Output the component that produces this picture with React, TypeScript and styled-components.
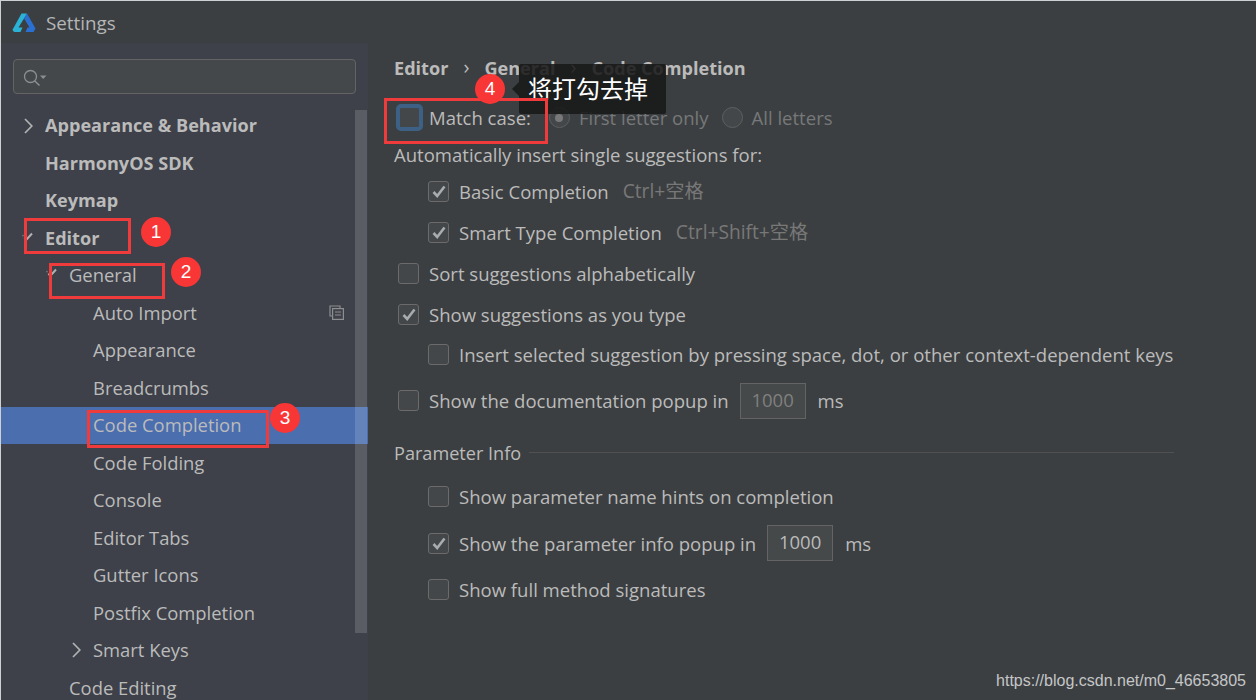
import React, { FC } from 'react'
import styled, { createGlobalStyle } from 'styled-components'

const GlobalStyle = createGlobalStyle`
  html, body {
    margin: 0;
    padding: 0;
    background: #3c3f41;
  }
  * { box-sizing: border-box; }
`

const sidebarItems: { label: string; level: number; bold?: boolean; arrow?: 'right' | 'down'; selected?: boolean; copy?: boolean }[] = [
  { label: 'Appearance & Behavior', level: 0, bold: true, arrow: 'right' },
  { label: 'HarmonyOS SDK', level: 0, bold: true },
  { label: 'Keymap', level: 0, bold: true },
  { label: 'Editor', level: 0, bold: true, arrow: 'down' },
  { label: 'General', level: 1, arrow: 'down' },
  { label: 'Auto Import', level: 2, copy: true },
  { label: 'Appearance', level: 2 },
  { label: 'Breadcrumbs', level: 2 },
  { label: 'Code Completion', level: 2, selected: true },
  { label: 'Code Folding', level: 2 },
  { label: 'Console', level: 2 },
  { label: 'Editor Tabs', level: 2 },
  { label: 'Gutter Icons', level: 2 },
  { label: 'Postfix Completion', level: 2 },
  { label: 'Smart Keys', level: 2, arrow: 'right' },
  { label: 'Code Editing', level: 1 },
]

const Logo: FC = () => (
  <svg width="24" height="20" viewBox="0 0 24 20">
    <path d="M9.5 0.5 L15 0.5 L6.5 14.5 H10.5 L8.5 19 H3 Q1 19 0.5 16.8 Z" fill="#2ab3d6" />
    <path d="M15 0.5 L23.5 15.5 L21.5 19 H13.5 L15.5 14.5 H17.5 L12 5.2 Z" fill="#2a70d2" />
  </svg>
)

const SearchIcon: FC = () => (
  <svg width="32" height="20" viewBox="0 0 32 20" fill="none">
    <circle cx="8.5" cy="8.5" r="6" stroke="#8c8e90" strokeWidth="1.3" />
    <path d="M12.8 13 L17.5 17.5" stroke="#8c8e90" strokeWidth="1.6" />
    <path d="M18 7.5 L24.5 7.5 L21.2 11 Z" fill="#8c8e90" />
  </svg>
)

const ArrowIcon: FC<{ dir: 'right' | 'down' }> = ({ dir }) =>
  dir === 'right' ? (
    <svg width="10" height="16" viewBox="0 0 10 16" fill="none">
      <path d="M1 1 L7.8 8 L1 15" stroke="#afb1b3" strokeWidth="1.7" />
    </svg>
  ) : (
    <svg width="12" height="10" viewBox="0 0 12 10" fill="none">
      <path d="M0.5 3 L1.5 4.2" stroke="#73767a" strokeWidth="1.4" />
      <path d="M2.5 5.5 L4.2 8 L10 1.5" stroke="#afb1b3" strokeWidth="2" />
    </svg>
  )

const CopyIcon: FC = () => (
  <svg width="15" height="15" viewBox="0 0 15 15" fill="none">
    <path d="M3.5 11 H1 V1 H11 V3.5" stroke="#8c8e90" strokeWidth="1.2" />
    <rect x="3.6" y="3.6" width="10.8" height="10.8" stroke="#8c8e90" strokeWidth="1.2" />
    <path d="M6 7 H12 M6 10 H12" stroke="#8c8e90" strokeWidth="1.2" />
  </svg>
)

const TickIcon: FC = () => (
  <svg width="14" height="13" viewBox="0 0 14 13" fill="none">
    <path d="M1.5 7 L5.2 11 L12.5 1.5" stroke="#a9abad" strokeWidth="2.6" />
  </svg>
)

const App: FC = () => {
  return (
    <Window>
      <GlobalStyle />
      <TitleBar>
        <Logo />
        <TitleText>Settings</TitleText>
      </TitleBar>
      <Body>
        <Sidebar>
          <SearchBox>
            <SearchIcon />
          </SearchBox>
          <Tree>
            <ScrollThumb />
            {sidebarItems.map((item) => (
              <TreeRow key={item.label} $selected={item.selected}>
                <TreeLabel $level={item.level} $bold={item.bold}>
                  {item.arrow && (
                    <ArrowSlot $dir={item.arrow}>
                      <ArrowIcon dir={item.arrow} />
                    </ArrowSlot>
                  )}
                  {item.label}
                </TreeLabel>
                {item.copy && (
                  <CopySlot>
                    <CopyIcon />
                  </CopySlot>
                )}
              </TreeRow>
            ))}
          </Tree>
        </Sidebar>
        <Panel>
          <Breadcrumbs>
            <span>Editor</span>
            <Sep>›</Sep>
            <span>General</span>
            <Sep>›</Sep>
            <span>Code Completion</span>
          </Breadcrumbs>

          <Row $height={49} $top={8}>
            <FocusBox />
            <RowText>Match case:</RowText>
            <Radio $checked $left={18} />
            <RowText $muted>First letter only</RowText>
            <Radio $left={13} />
            <RowText $muted>All letters</RowText>
          </Row>
          <Row $height={25} $indent={0}>
            <RowText>Automatically insert single suggestions for:</RowText>
          </Row>
          <Row $height={41} $indent={34} $top={4}>
            <CheckBox $checked><TickIcon /></CheckBox>
            <RowText>Basic Completion</RowText>
            <Hint>Ctrl+空格</Hint>
          </Row>
          <Row $height={41} $indent={34}>
            <CheckBox $checked><TickIcon /></CheckBox>
            <RowText>Smart Type Completion</RowText>
            <Hint>Ctrl+Shift+空格</Hint>
          </Row>
          <Row $height={41} $indent={4}>
            <CheckBox />
            <RowText>Sort suggestions alphabetically</RowText>
          </Row>
          <Row $height={40} $indent={4}>
            <CheckBox $checked><TickIcon /></CheckBox>
            <RowText>Show suggestions as you type</RowText>
          </Row>
          <Row $height={41} $indent={34}>
            <CheckBox />
            <RowText>Insert selected suggestion by pressing space, dot, or other context-dependent keys</RowText>
          </Row>
          <Row $height={51} $indent={4}>
            <CheckBox />
            <RowText>Show the documentation popup in</RowText>
            <NumberBox $muted>1000</NumberBox>
            <RowText>ms</RowText>
          </Row>
          <SectionHead>
            <span>Parameter Info</span>
            <SectionLine />
          </SectionHead>
          <Row $height={47} $indent={34} $top={7}>
            <CheckBox />
            <RowText>Show parameter name hints on completion</RowText>
          </Row>
          <Row $height={46} $indent={34}>
            <CheckBox $checked><TickIcon /></CheckBox>
            <RowText>Show the parameter info popup in</RowText>
            <NumberBox>1000</NumberBox>
            <RowText>ms</RowText>
          </Row>
          <Row $height={47} $indent={34}>
            <CheckBox />
            <RowText>Show full method signatures</RowText>
          </Row>
        </Panel>
      </Body>

      {/* screenshot annotations sit on top of the dialog */}
      <RedBox style={{ left: 24, top: 218, width: 107, height: 36 }} />
      <RedBox style={{ left: 49, top: 263, width: 116, height: 36 }} />
      <RedBox style={{ left: 87, top: 410, width: 182, height: 38 }} />
      <RedBox style={{ left: 384, top: 98, width: 164, height: 46 }} />
      <Badge style={{ left: 141, top: 217 }}>1</Badge>
      <Badge style={{ left: 171, top: 257 }}>2</Badge>
      <Badge style={{ left: 270, top: 403 }}>3</Badge>
      <Badge style={{ left: 475, top: 74 }}>4</Badge>
      <Callout>将打勾去掉</Callout>
      <Watermark>https://blog.csdn.net/m0_46653805</Watermark>
    </Window>
  )
}

export default App

const Window = styled.div`
  position: relative;
  width: 1256px;
  height: 700px;
  overflow: hidden;
  background: #3c3f41;
  color: #bbbbbb;
  font-family: "Open Sans", "Noto Sans CJK SC", sans-serif;
  font-size: 18.55px;

  &::after {
    content: '';
    position: absolute;
    inset: 0;
    z-index: 8;
    pointer-events: none;
    border-top: 1px solid #cfd0d1;
    border-left: 1px solid #cfd0d1;
  }
`

const TitleBar = styled.div`
  display: flex;
  align-items: center;
  gap: 10px;
  height: 43px;
  padding: 3px 0 0 12px;
  background: #3c3f41;
`

const TitleText = styled.span`
  font-size: 18.8px;
  color: #b4b6b8;
`

const Body = styled.div`
  display: flex;
  height: 657px;
`

const Sidebar = styled.div`
  width: 368px;
  flex-shrink: 0;
  background: #3e4149;
  padding-top: 16px;
  overflow: hidden;
`

const SearchBox = styled.div`
  display: flex;
  align-items: center;
  width: 343px;
  height: 35px;
  margin-left: 13px;
  padding: 2px 0 0 8px;
  background: #45484a;
  border: 1px solid #646464;
  border-radius: 4px;
`

const Tree = styled.div`
  position: relative;
  margin-top: 12.6px;
`

const ScrollThumb = styled.div`
  position: absolute;
  top: 3px;
  left: 355px;
  width: 12px;
  height: 523px;
  background: rgba(255, 255, 255, 0.15);
  z-index: 1;
`

const TreeRow = styled.div<{ $selected?: boolean }>`
  position: relative;
  display: flex;
  align-items: center;
  height: 37.5px;
  background: ${(p) => (p.$selected ? '#4b6eaf' : 'transparent')};
`

const TreeLabel = styled.div<{ $level: number; $bold?: boolean }>`
  position: relative;
  margin-left: ${(p) => 45 + p.$level * 24}px;
  padding-bottom: ${(p) => (p.$bold ? 0 : 1)}px;
  font-weight: ${(p) => (p.$bold ? 700 : 400)};
  font-size: ${(p) => (p.$bold ? 18.1 : 18.4)}px;
  white-space: nowrap;
`

const ArrowSlot = styled.span<{ $dir: 'right' | 'down' }>`
  position: absolute;
  display: flex;
  left: ${(p) => (p.$dir === 'right' ? -21 : -23)}px;
  top: ${(p) => (p.$dir === 'right' ? 5 : 6)}px;
`

const CopySlot = styled.span`
  position: absolute;
  display: flex;
  left: 329px;
  top: 11px;
`

const Panel = styled.div`
  flex: 1;
  padding: 8px 0 0 26px;
`

const Breadcrumbs = styled.div`
  display: flex;
  align-items: center;
  gap: 13px;
  height: 34px;
  font-weight: 700;
  font-size: 18.1px;
  white-space: nowrap;
`

const Sep = styled.span`
  font-weight: 400;
  font-size: 20px;
  padding: 0 2px 4px;
`

const Row = styled.div<{ $height: number; $indent?: number; $top?: number }>`
  display: flex;
  align-items: center;
  height: ${(p) => p.$height}px;
  margin-top: ${(p) => p.$top ?? 0}px;
  padding-left: ${(p) => p.$indent ?? 2}px;
  white-space: nowrap;
`

const RowText = styled.span<{ $muted?: boolean }>`
  color: ${(p) => (p.$muted ? '#767879' : '#bbbbbb')};
`

const CheckBox = styled.span<{ $checked?: boolean }>`
  display: flex;
  align-items: center;
  justify-content: center;
  width: 21px;
  height: 21px;
  margin-right: 10px;
  flex-shrink: 0;
  background: #43474a;
  border: 1px solid #6b6b6b;
  border-radius: 3px;
`

const FocusBox = styled.span`
  width: 27px;
  height: 27px;
  margin-right: 6px;
  flex-shrink: 0;
  background: #43474a;
  border: 4px solid #3d6185;
  border-radius: 5px;
`

const Radio = styled.span<{ $checked?: boolean; $left: number }>`
  position: relative;
  width: 21px;
  height: 21px;
  margin: 0 9px 0 ${(p) => p.$left}px;
  flex-shrink: 0;
  border: 1px solid #5e6060;
  border-radius: 50%;
  background: #43474a;

  &::after {
    content: '';
    display: ${(p) => (p.$checked ? 'block' : 'none')};
    position: absolute;
    left: 5.5px;
    top: 5.5px;
    width: 8px;
    height: 8px;
    border-radius: 50%;
    background: #787878;
  }
`

const Hint = styled.span`
  margin-left: 14px;
  font-size: 19.2px;
  color: #787878;
  padding-bottom: 3px;
`

const NumberBox = styled.span<{ $muted?: boolean }>`
  display: flex;
  align-items: center;
  justify-content: center;
  width: 66px;
  height: 36px;
  margin: 0 12px 0 11px;
  padding-bottom: 3px;
  border: 1px solid #646464;
  background: #45494a;
  color: ${(p) => (p.$muted ? '#808080' : '#bbbbbb')};
`

const SectionHead = styled.div`
  display: flex;
  align-items: center;
  gap: 8px;
  width: 780px;
  height: 26px;
  margin-top: 14px;
  font-size: 18.1px;
`

const SectionLine = styled.span`
  flex: 1;
  height: 1px;
  margin-top: -2px;
  background: #515151;
`

const RedBox = styled.div`
  position: absolute;
  z-index: 5;
  border: 3px solid #ef3b3b;
`

const Badge = styled.div`
  position: absolute;
  z-index: 6;
  display: flex;
  align-items: center;
  justify-content: center;
  width: 30px;
  height: 30px;
  border-radius: 50%;
  background: #f93636;
  color: #ffffff;
  font-family: "Liberation Sans", sans-serif;
  font-size: 19px;
`

const Callout = styled.div`
  position: absolute;
  z-index: 4;
  left: 519px;
  top: 64px;
  width: 147px;
  height: 50px;
  padding-left: 9px;
  line-height: 48px;
  font-size: 24px;
  font-family: "Noto Sans CJK SC", sans-serif;
  color: #ffffff;
  background: rgba(24, 24, 24, 0.87);
  border-radius: 2px;

  &::before {
    content: '';
    position: absolute;
    left: -7px;
    top: 18px;
    border-style: solid;
    border-width: 7px 7px 7px 0;
    border-color: transparent rgba(24, 24, 24, 0.87) transparent transparent;
  }
`

const Watermark = styled.div`
  position: absolute;
  right: 10px;
  top: 672px;
  font-family: "Liberation Sans", sans-serif;
  font-size: 16px;
  color: #c4c6c8;
`
